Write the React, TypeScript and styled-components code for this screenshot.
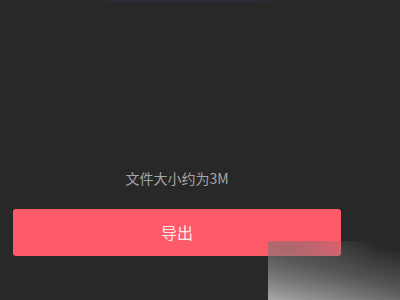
import React from "react";
import styled, { createGlobalStyle } from "styled-components";

const Global = createGlobalStyle`
  html, body { margin: 0; padding: 0; background: #282828; }
  body { font-family: "Noto Sans CJK SC", "Noto Sans", sans-serif; }
`;

const Page = styled.div`
  position: relative;
  width: 400px;
  height: 300px;
  overflow: hidden;
  background: #282828;
  display: flex;
  flex-direction: column;
`;

const TopLine = styled.div`
  height: 2px;
  margin: 0 110px 0 80px;
  background: linear-gradient(90deg, rgba(50,48,62,0), rgba(46,44,60,0.8) 20%, rgba(46,44,60,0.8) 80%, rgba(50,48,62,0));
`;

const Content = styled.div`
  width: 328px;
  margin: 167px 0 0 13px;
  display: flex;
  flex-direction: column;
  align-items: center;
`;

const SizeNote = styled.div`
  font-size: 14px;
  line-height: 18px;
  color: #a6a6a6;
`;

const ExportButton = styled.button`
  margin-top: 22px;
  width: 328px;
  height: 47px;
  border: none;
  border-radius: 3px;
  background: #fd5a6a;
  color: #fbe8ea;
  font-family: "Noto Sans CJK SC", "Noto Sans", sans-serif;
  font-size: 16px;
  font-weight: 400;
  display: flex;
  align-items: center;
  justify-content: center;
  padding: 0 0 1px;
`;

const Watermark = styled.div`
  position: absolute;
  left: 268px;
  top: 241px;
  width: 132px;
  height: 59px;
  background:
    radial-gradient(ellipse 90px 50px at 15% 10%, rgba(95,95,95,0.4), rgba(95,95,95,0) 100%),
    linear-gradient(195deg, rgba(140,140,140,0) 10%, rgba(150,150,150,0.4) 50%, rgba(178,178,178,0.92) 100%);
`;

export default function App() {
  return (
    <>
      <Global />
      <Page>
        <TopLine />
        <Content>
          <SizeNote>文件大小约为3M</SizeNote>
          <ExportButton>导出</ExportButton>
        </Content>
        <Watermark />
      </Page>
    </>
  );
}
